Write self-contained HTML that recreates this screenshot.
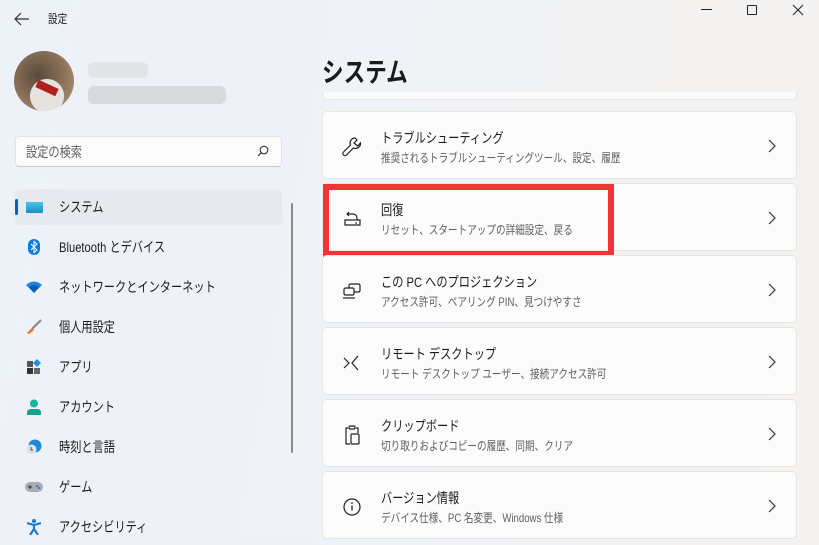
<!DOCTYPE html>
<html><head><meta charset="utf-8"><style>
*{margin:0;padding:0;box-sizing:border-box}
body{width:819px;height:539px;overflow:hidden;position:relative;font-family:"Liberation Sans","Noto Sans CJK JP",sans-serif;color:#1b1b1b;background:linear-gradient(100deg,#edf2f9 0%,#eff2f7 45%,#f4f2f0 80%,#f5f2ef 100%)}
.abs{position:absolute}
.x{display:inline-block;transform:scaleX(0.8);transform-origin:left center;white-space:nowrap}
.nav{position:absolute;left:15px;width:267px;height:36px;display:flex;align-items:center;font-size:14px}
.nav .ic{width:18px;height:18px;margin-left:10px;margin-right:16px;display:flex;align-items:center;justify-content:center}
.card{position:absolute;left:322px;width:475px;height:68px;background:#fbfbfb;border:1px solid #e6e6e6;border-radius:5px}
.card .t{position:absolute;left:58px;top:16px;font-size:14px;color:#1b1b1b}
.card .s{position:absolute;left:58px;top:37px;font-size:12px;color:#5f5f5f}
.card .ic{position:absolute;left:18px;top:24px;width:22px;height:22px}
.card .ch{position:absolute;right:20px;top:27px}
</style></head><body>
<svg class="abs" style="left:14px;top:12px" width="16" height="14"><path d="M7 1L1 7l6 6M1 7h14" fill="none" stroke="#333" stroke-width="1.2"/></svg>
<div class="abs" style="left:48px;top:10px;font-size:12px"><span class="x">設定</span></div>
<div class="abs" style="left:701px;top:9px;width:11px;height:1px;background:#222"></div>
<div class="abs" style="left:747px;top:5px;width:10px;height:10px;border:1px solid #222;border-radius:1px"></div>
<svg class="abs" style="left:792px;top:4px" width="12" height="12"><path d="M1 1l10 10M11 1L1 11" stroke="#222" stroke-width="1"/></svg>
<div class="abs" style="left:14px;top:51px;width:60px;height:60px;border-radius:50%;background:radial-gradient(circle at 55% 75%,#e6e2de 0 30%,transparent 31%),radial-gradient(circle at 40% 40%,#5a4a3c,#8a7058 50%,#b8a080)"></div>
<div class="abs" style="left:36px;top:84px;width:22px;height:8px;background:#b02020;transform:rotate(25deg)"></div>
<div class="abs" style="left:88px;top:62px;width:60px;height:16px;background:#e2e4e8;border-radius:6px"></div>
<div class="abs" style="left:88px;top:86px;width:138px;height:18px;background:#d8dadd;border-radius:6px"></div>
<div class="abs" style="left:15px;top:136px;width:267px;height:31px;background:#fbfbfb;border:1px solid #e2e2e2;border-bottom:1px solid #c8c8c8;border-radius:4px"></div>
<div class="abs" style="left:26px;top:142px;font-size:14px;color:#5f5f5f"><span class="x">設定の検索</span></div>
<svg class="abs" style="left:257px;top:145px" width="12" height="12"><circle cx="7" cy="5" r="3.8" fill="none" stroke="#333" stroke-width="1.1"/><path d="M4.3 7.7L1 11" stroke="#333" stroke-width="1.2"/></svg>
<div class="nav" style="top:189px;background:#e6e9ee;border-radius:5px"><div class="abs" style="left:0;top:10px;width:3px;height:16px;background:#0067c0;border-radius:2px"></div><span class="ic"><span style="width:17px;height:11px;background:linear-gradient(#4cc2e8,#1a8fc7);border-radius:1px;display:block"></span></span><span class="x">システム</span></div>
<div class="nav" style="top:229px"><span class="ic"><svg width="12" height="16"><rect width="12" height="16" rx="6" fill="#0a7ce0"/><path d="M3 5l6 6-3 2.5V2.5L9 5 3 11" fill="none" stroke="#fff" stroke-width="1"/></svg></span><span class="x">Bluetooth とデバイス</span></div>
<div class="nav" style="top:269px"><span class="ic"><svg width="16" height="12"><path d="M0 4Q8-3 16 4L8 12z" fill="#1a86d9"/><path d="M3 6Q8 2 13 6L8 12z" fill="#0e5cb0"/></svg></span><span class="x">ネットワークとインターネット</span></div>
<div class="nav" style="top:309px"><span class="ic"><svg width="16" height="16"><path d="M15 1L6 10" stroke="#888" stroke-width="2.2"/><path d="M6 9l2 2-5 4-2-1z" fill="#e8702a"/></svg></span><span class="x">個人用設定</span></div>
<div class="nav" style="top:349px"><span class="ic"><svg width="16" height="16"><rect x="1" y="2" width="6" height="6" fill="#555"/><rect x="1" y="9" width="6" height="6" fill="#333"/><rect x="8" y="9" width="6" height="6" fill="#666"/><path d="M11 0l4 4-4 4-4-4z" fill="#1a8fe0"/></svg></span><span class="x">アプリ</span></div>
<div class="nav" style="top:389px"><span class="ic"><svg width="16" height="16"><circle cx="8" cy="4.5" r="4" fill="#1bb3a0"/><path d="M1 16v-2q0-4 4-4h6q4 0 4 4v2z" fill="#16a08e"/></svg></span><span class="x">アカウント</span></div>
<div class="nav" style="top:429px"><span class="ic"><svg width="16" height="16"><circle cx="9" cy="7" r="6.5" fill="#1e88d6"/><circle cx="5.5" cy="10.5" r="5" fill="#dfe3e8"/><path d="M5 8v3h2" stroke="#444" fill="none"/></svg></span><span class="x">時刻と言語</span></div>
<div class="nav" style="top:469px"><span class="ic"><svg width="18" height="12"><rect y="1" width="18" height="10" rx="5" fill="#a8adb4"/><path d="M3 6h4M5 4v4" stroke="#333"/><circle cx="12" cy="5" r="1" fill="#1a6fd0"/><circle cx="14" cy="7" r="1" fill="#1a6fd0"/></svg></span><span class="x">ゲーム</span></div>
<div class="nav" style="top:509px"><span class="ic"><svg width="14" height="16"><circle cx="7" cy="2" r="2" fill="#1a7bd8"/><path d="M0 4l7 2 7-2M7 6v4l-4 6M7 10l4 6" stroke="#1a7bd8" stroke-width="2.2" fill="none"/></svg></span><span class="x">アクセシビリティ</span></div>
<div class="abs" style="left:291px;top:203px;width:2px;height:250px;background:#8a8a8a;border-radius:1px"></div>
<div class="abs" style="left:322px;top:51px;font-size:27px;font-weight:bold;color:#1b1b1b"><span class="x">システム</span></div>
<div class="abs" style="left:322px;top:92px;width:475px;height:10px;overflow:hidden"><div class="card" style="left:0;top:-60px"></div></div>
<div class="card" style="top:111px"><svg class="ic" viewBox="0 0 22 22"><path d="M14 2a5 5 0 0 0-4.5 7L2.5 16a2 2 0 0 0 3 3l7-7A5 5 0 0 0 19.5 7L16.5 10 13 7l3-3A5 5 0 0 0 14 2z" fill="none" stroke="#222" stroke-width="1.2"/></svg><div class="t"><span class="x">トラブルシューティング</span></div><div class="s"><span class="x">推奨されるトラブルシューティングツール、設定、履歴</span></div><svg class="ch" width="8" height="14"><path d="M1 1l6 6-6 6" fill="none" stroke="#333" stroke-width="1.2"/></svg></div>
<div class="card" style="top:183px"><svg class="ic" viewBox="0 0 22 22"><path d="M8 4L6 6l2 2M6 6h6a4 4 0 0 1 4 4v2M4 12v5h15v-5z" fill="none" stroke="#222" stroke-width="1.2"/><path d="M14 15h2" stroke="#222"/></svg><div class="t"><span class="x">回復</span></div><div class="s"><span class="x">リセット、スタートアップの詳細設定、戻る</span></div><svg class="ch" width="8" height="14"><path d="M1 1l6 6-6 6" fill="none" stroke="#333" stroke-width="1.2"/></svg></div>
<div class="abs" style="left:323px;top:184px;width:291px;height:73px;border:6px solid #f23437"></div>
<div class="card" style="top:255px"><svg class="ic" viewBox="0 0 22 22"><rect x="8" y="4" width="11" height="8" rx="1.5" fill="none" stroke="#222" stroke-width="1.2"/><rect x="3" y="8" width="10" height="7" rx="1.5" fill="#fbfbfb" stroke="#222" stroke-width="1.2"/><path d="M2 18h12" stroke="#222" stroke-width="1.2"/></svg><div class="t"><span class="x">この PC へのプロジェクション</span></div><div class="s"><span class="x">アクセス許可、ペアリング PIN、見つけやすさ</span></div><svg class="ch" width="8" height="14"><path d="M1 1l6 6-6 6" fill="none" stroke="#333" stroke-width="1.2"/></svg></div>
<div class="card" style="top:327px"><svg class="ic" viewBox="0 0 22 22"><path d="M3 6l5 5-5 5M17 4l-6 7 6 7" fill="none" stroke="#222" stroke-width="1.2"/></svg><div class="t"><span class="x">リモート デスクトップ</span></div><div class="s"><span class="x">リモート デスクトップ ユーザー、接続アクセス許可</span></div><svg class="ch" width="8" height="14"><path d="M1 1l6 6-6 6" fill="none" stroke="#333" stroke-width="1.2"/></svg></div>
<div class="card" style="top:399px"><svg class="ic" viewBox="0 0 22 22"><path d="M7 4H5v16h4M15 4h2v5" fill="none" stroke="#222" stroke-width="1.2"/><rect x="8" y="2" width="6" height="3" rx="1" fill="none" stroke="#222" stroke-width="1.2"/><rect x="10" y="10" width="8" height="10" rx="1" fill="none" stroke="#222" stroke-width="1.2"/></svg><div class="t"><span class="x">クリップボード</span></div><div class="s"><span class="x">切り取りおよびコピーの履歴、同期、クリア</span></div><svg class="ch" width="8" height="14"><path d="M1 1l6 6-6 6" fill="none" stroke="#333" stroke-width="1.2"/></svg></div>
<div class="card" style="top:471px"><svg class="ic" viewBox="0 0 22 22"><circle cx="11" cy="11" r="8" fill="none" stroke="#222" stroke-width="1.2"/><path d="M11 9.5v5" stroke="#222" stroke-width="1.3"/><circle cx="11" cy="7" r=".9" fill="#222"/></svg><div class="t"><span class="x">バージョン情報</span></div><div class="s"><span class="x">デバイス仕様、PC 名変更、Windows 仕様</span></div><svg class="ch" width="8" height="14"><path d="M1 1l6 6-6 6" fill="none" stroke="#333" stroke-width="1.2"/></svg></div>
</body></html>
